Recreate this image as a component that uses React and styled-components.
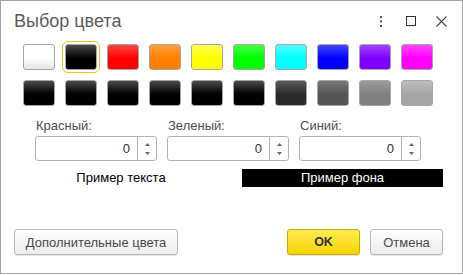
import styled, { createGlobalStyle } from 'styled-components';

const GlobalStyle = createGlobalStyle`
    body {
        margin: 0;
        background: #ffffff;
        font-family: "Liberation Sans", Arial, sans-serif;
    }
`;

const swatches = [
    { top: '#ffffff', bottom: '#ffffff', end: '#e6e6e6' },
    { top: '#4a4a4a', bottom: '#000000', selected: true },
    { top: '#ff4545', bottom: '#ff0000' },
    { top: '#ffa040', bottom: '#ff8000' },
    { top: '#ffff55', bottom: '#ffff00' },
    { top: '#45ff45', bottom: '#00ff00' },
    { top: '#55ffff', bottom: '#00ffff' },
    { top: '#4545ff', bottom: '#0000ff' },
    { top: '#a045ff', bottom: '#8000ff' },
    { top: '#ff45ff', bottom: '#ff00ff' },
    { top: '#4a4a4a', bottom: '#000000' },
    { top: '#4a4a4a', bottom: '#000000' },
    { top: '#4a4a4a', bottom: '#000000' },
    { top: '#4a4a4a', bottom: '#000000' },
    { top: '#4a4a4a', bottom: '#000000' },
    { top: '#4a4a4a', bottom: '#000000' },
    { top: '#5a5a5a', bottom: '#2a2a2a' },
    { top: '#7a7a7a', bottom: '#555555' },
    { top: '#9c9c9c', bottom: '#808080' },
    { top: '#bdbdbd', bottom: '#a6a6a6' },
];

const channels = ['Красный:', 'Зеленый:', 'Синий:'];

export default function App () {
    return (
        <>
            <GlobalStyle />
            <Window>
                <TitleBar>
                    <Title>Выбор цвета</Title>
                    <Controls>
                        <IconButton>
                            <svg width="2" height="11" viewBox="0 0 2 11">
                                <rect x="0" y="0" width="2" height="2" fill="#555" />
                                <rect x="0" y="4.5" width="2" height="2" fill="#555" />
                                <rect x="0" y="9" width="2" height="2" fill="#555" />
                            </svg>
                        </IconButton>
                        <IconButton>
                            <svg width="10" height="10" viewBox="0 0 10 10">
                                <rect x="0.5" y="0.5" width="9" height="9" fill="none" stroke="#333" />
                            </svg>
                        </IconButton>
                        <IconButton>
                            <svg width="11" height="11" viewBox="0 0 11 11">
                                <path d="M0.5 0.5 L10.5 10.5 M10.5 0.5 L0.5 10.5" stroke="#444" strokeWidth="1.1" />
                            </svg>
                        </IconButton>
                    </Controls>
                </TitleBar>

                <Palette>
                    {swatches.map((swatch, index) => (
                        <Swatch
                            key={index}
                            $top={swatch.top}
                            $bottom={swatch.bottom}
                            $end={swatch.end || swatch.bottom}
                            $selected={swatch.selected}
                        />
                    ))}
                </Palette>

                <Fields>
                    {channels.map((label) => (
                        <Field key={label}>
                            <Label>{label}</Label>
                            <NumberBox>
                                <Value>0</Value>
                                <Spin>
                                    <svg width="5" height="3" viewBox="0 0 5 3"><path d="M0 3 L2.5 0 L5 3 Z" fill="#666" /></svg>
                                    <svg width="5" height="3" viewBox="0 0 5 3"><path d="M0 0 L2.5 3 L5 0 Z" fill="#666" /></svg>
                                </Spin>
                            </NumberBox>
                        </Field>
                    ))}
                </Fields>

                <Samples>
                    <TextSample>Пример текста</TextSample>
                    <BackSample>Пример фона</BackSample>
                </Samples>

                <Footer>
                    <Button $width="164px">Дополнительные цвета</Button>
                    <Actions>
                        <Button $primary $width="73px">OK</Button>
                        <Button $width="73px">Отмена</Button>
                    </Actions>
                </Footer>
            </Window>
        </>
    );
}

const Window = styled.div`
    width: 463px;
    height: 274px;
    box-sizing: border-box;
    border: 1px solid #a3a3a3;
    display: flex;
    flex-direction: column;
    padding: 0 19px 18px 12px;
    background: #ffffff;
`;

const TitleBar = styled.div`
    height: 43px;
    box-sizing: border-box;
    padding-top: 10px;
    display: flex;
    align-items: flex-start;
    justify-content: space-between;
    margin-right: -13px;
`;

const Title = styled.div`
    font-size: 18px;
    line-height: 20px;
    color: #5c5c5c;
    padding-left: 1px;
`;

const Controls = styled.div`
    display: flex;
    height: 20px;
    align-items: center;
`;

const IconButton = styled.div`
    width: 30px;
    height: 20px;
    display: flex;
    align-items: center;
    justify-content: center;
`;

const Palette = styled.div`
    display: grid;
    grid-template-columns: repeat(10, 32px);
    grid-auto-rows: 26px;
    column-gap: 10px;
    row-gap: 10px;
    margin-left: 10px;
`;

const Swatch = styled.div`
    box-sizing: border-box;
    border: 1px solid #a6a6a6;
    border-radius: 3px;
    background: linear-gradient(to bottom, ${({ $top }) => $top} 0%, ${({ $bottom }) => $bottom} 55%, ${({ $end }) => $end} 100%);
    outline: ${({ $selected }) => $selected ? '1px solid #f2c21b' : 'none'};
    outline-offset: 2px;
`;

const Fields = styled.div`
    display: grid;
    grid-template-columns: repeat(3, 122px);
    column-gap: 10px;
    margin: 12px 0 0 22px;
`;

const Field = styled.div`
    display: flex;
    flex-direction: column;
`;

const Label = styled.span`
    font-size: 13px;
    line-height: 16px;
    color: #4d4d4d;
    margin-bottom: 2px;
    padding-left: 1px;
`;

const NumberBox = styled.div`
    height: 25px;
    box-sizing: border-box;
    border: 1px solid #b3b3b3;
    border-radius: 3px;
    display: flex;
    background: #ffffff;
`;

const Value = styled.span`
    flex: 1;
    text-align: right;
    font-size: 13px;
    line-height: 23px;
    color: #333333;
    padding-right: 7px;
`;

const Spin = styled.div`
    width: 18px;
    border-left: 1px solid #b3b3b3;
    display: flex;
    flex-direction: column;
    align-items: center;
    justify-content: space-between;
    padding: 6px 0 5px;
`;

const Samples = styled.div`
    display: grid;
    grid-template-columns: 172px 201px;
    column-gap: 35px;
    margin: 8px 0 0 22px;
`;

const TextSample = styled.div`
    font-size: 13px;
    line-height: 18px;
    text-align: center;
    color: #000000;
`;

const BackSample = styled.div`
    font-size: 13px;
    line-height: 18px;
    text-align: center;
    color: #ffffff;
    background: #000000;
`;

const Footer = styled.div`
    margin-top: auto;
    display: flex;
    justify-content: space-between;
    padding-left: 1px;
`;

const Actions = styled.div`
    display: flex;
    gap: 10px;
`;

const Button = styled.button`
    width: ${({ $width }) => $width};
    height: 26px;
    box-sizing: border-box;
    padding: 0;
    font-family: "Liberation Sans", Arial, sans-serif;
    font-size: ${({ $primary }) => $primary ? '12.5px' : '13px'};
    font-weight: ${({ $primary }) => $primary ? 700 : 400};
    color: ${({ $primary }) => $primary ? '#333333' : '#4a4a4a'};
    border-radius: 3px;
    border: 1px solid ${({ $primary }) => $primary ? '#c9a900' : '#b8b8b8'};
    background: ${({ $primary }) => $primary
        ? 'linear-gradient(to bottom, #ffec52 0%, #f7d300 100%)'
        : 'linear-gradient(to bottom, #ffffff 0%, #ececec 100%)'};
    box-shadow: 0 1px 1px rgba(0, 0, 0, 0.12);
    white-space: nowrap;
`;
